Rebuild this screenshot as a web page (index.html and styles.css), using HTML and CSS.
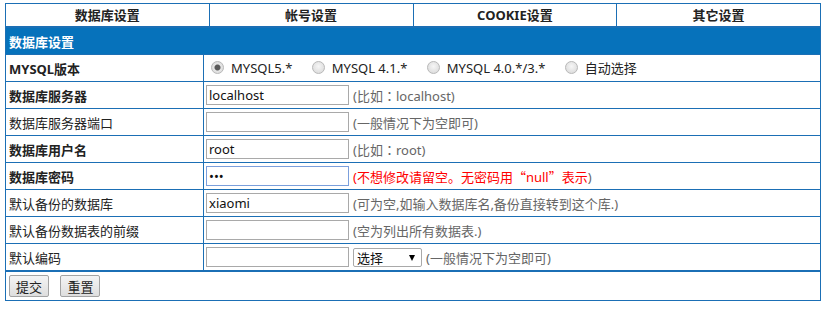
FILE: index.html
```html
<!DOCTYPE html>
<html lang="zh-CN">
<head>
    <meta charset="UTF-8">
    <title>数据库设置</title>
    <link rel="stylesheet" href="styles.css">
</head>
<body>
    <table class="tabs">
        <tr>
            <td>数据库设置</td>
            <td>帐号设置</td>
            <td>COOKIE设置</td>
            <td>其它设置</td>
        </tr>
    </table>
    <form>
        <table class="form">
            <tr><td class="title" colspan="2">数据库设置</td></tr>
            <tr>
                <td class="label strong">MYSQL版本</td>
                <td class="radios">
                    <label><input type="radio" name="ver" checked>MYSQL5.*</label>
                    <label><input type="radio" name="ver">MYSQL 4.1.*</label>
                    <label><input type="radio" name="ver">MYSQL 4.0.*/3.*</label>
                    <label><input type="radio" name="ver">自动选择</label>
                </td>
            </tr>
            <tr>
                <td class="label strong">数据库服务器</td>
                <td><input class="text" type="text" value="localhost"><span class="hint">(比如<span class="wide" lang="zh-TW">：</span>localhost)</span></td>
            </tr>
            <tr>
                <td class="label">数据库服务器端口</td>
                <td><input class="text" type="text"><span class="hint">(一般情况下为空即可)</span></td>
            </tr>
            <tr>
                <td class="label strong">数据库用户名</td>
                <td><input class="text" type="text" value="root"><span class="hint">(比如<span class="wide" lang="zh-TW">：</span>root)</span></td>
            </tr>
            <tr>
                <td class="label strong">数据库密码</td>
                <td><input class="text focus" type="password" value="abc"><span class="hint"><span class="warn">(不想修改请留空。无密码用<span class="wide">“</span>null<span class="wide">”</span>表示</span>)</span></td>
            </tr>
            <tr>
                <td class="label">默认备份的数据库</td>
                <td><input class="text" type="text" value="xiaomi"><span class="hint">(可为空,如输入数据库名,备份直接转到这个库.)</span></td>
            </tr>
            <tr>
                <td class="label">默认备份数据表的前缀</td>
                <td><input class="text" type="text"><span class="hint">(空为列出所有数据表.)</span></td>
            </tr>
            <tr>
                <td class="label">默认编码</td>
                <td><input class="text" type="text"><span class="select"><select class="charset">
                        <option>选择</option>
                        <option>utf8</option>
                        <option>gbk</option>
                    </select></span><span class="hint">(一般情况下为空即可)</span></td>
            </tr>
        </table>
        <div class="actions">
            <button type="submit">提交</button>
            <button type="reset">重置</button>
        </div>
    </form>
</body>
</html>
```

FILE: styles.css
```css
:root {
    --blue: #0672bb;
    --line: #1b6fb5;
    --text: #222;
    --hint: #666;
}

body {
    margin: 3px 4px 0 5px;
    font-family: "Noto Sans", "Noto Sans CJK SC", sans-serif;
    font-size: 13px;
    color: var(--text);
    background: #fff;
}

table {
    border-collapse: collapse;
    width: 816px;
}

.tabs td {
    width: 25%;
    height: 22px;
    padding: 0;
    border: 1px solid var(--line);
    text-align: center;
    font-weight: bold;
    line-height: 20px;
}

.form td {
    height: 26px;
    padding: 0 2px;
    border: 1px solid var(--line);
    white-space: nowrap;
}

.form .title {
    background-color: var(--blue);
    color: #fff;
    font-weight: bold;
    padding-left: 3px;
}

.form .label {
    width: 192px;
    padding-left: 3px;
}

.strong {
    font-weight: bold;
}

/* full-width punctuation, centred as the CJK UI font draws it */
.wide {
    font-family: "Noto Sans CJK TC", "Noto Sans CJK SC", sans-serif;
}

.radios label {
    display: inline-flex;
    align-items: center;
    gap: 7px;
    margin-right: 16px;
}

.radios label:first-child {
    margin-left: 5px;
}

input[type=radio] {
    appearance: none;
    -webkit-appearance: none;
    width: 13px;
    height: 13px;
    margin: 0;
    border: 1px solid #b9b9b9;
    border-radius: 50%;
    background: radial-gradient(circle at 50% 40%, #f6f6f6, #d6d6d6);
    box-sizing: border-box;
}

input[type=radio]:checked {
    background: radial-gradient(circle, #5a5a5a 0, #5a5a5a 2.5px, #e6e6e6 3.5px, #d6d6d6);
}

.text {
    box-sizing: border-box;
    width: 143px;
    height: 20px;
    margin: 0;
    padding: 1px 2px;
    border: 1px solid #a9a9a9;
    font-family: "Noto Sans", "Noto Sans CJK SC", sans-serif;
    font-size: 13px;
    color: #111;
    vertical-align: middle;
}

.text.focus {
    border-color: #7b9fdc;
    outline: none;
}

.hint {
    margin-left: 4px;
    color: var(--hint);
    vertical-align: middle;
}

.warn {
    color: #f00;
}

.select {
    position: relative;
    display: inline-block;
    margin-left: 4px;
    vertical-align: middle;
}

.select::after {
    content: "";
    position: absolute;
    right: 7px;
    top: 7px;
    border-left: 3.5px solid transparent;
    border-right: 3.5px solid transparent;
    border-top: 6px solid #000;
    pointer-events: none;
}

.charset {
    appearance: none;
    -webkit-appearance: none;
    box-sizing: border-box;
    display: block;
    width: 69px;
    height: 19px;
    margin: 0;
    padding: 0 3px;
    border: 1px solid #a9a9a9;
    border-radius: 2px;
    background: #fff;
    font-family: "Noto Sans", "Noto Sans CJK SC", sans-serif;
    font-size: 13px;
    color: #111;
}

.actions {
    box-sizing: border-box;
    width: 816px;
    height: 30px;
    padding: 3px 3px 0;
    border: 1px solid var(--line);
}

.actions button {
    box-sizing: border-box;
    height: 22px;
    width: 40px;
    margin-right: 8px;
    padding: 0;
    border: 1px solid #a3a3a3;
    border-radius: 2px;
    background: linear-gradient(#f4f4f4, #dedede);
    font-family: "Noto Sans", "Noto Sans CJK SC", sans-serif;
    font-size: 13px;
    color: #222;
}
```
